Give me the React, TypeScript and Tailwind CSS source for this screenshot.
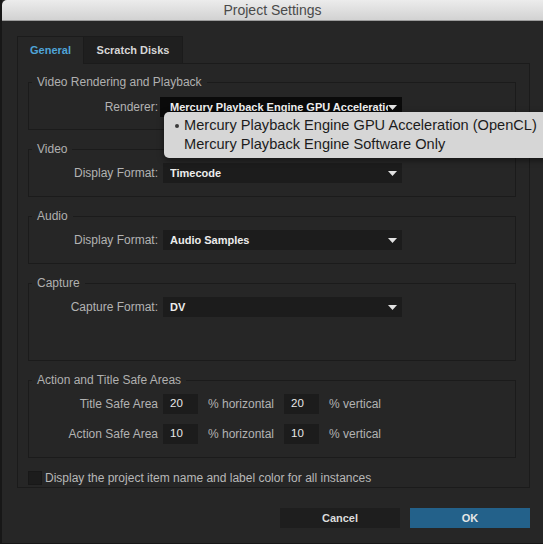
import React from "react";

function Arrow() {
  return (
    <svg width="9" height="5" viewBox="0 0 9 5" className="shrink-0">
      <polygon points="0,0 9,0 4.5,5" fill="#e2e2e2" />
    </svg>
  );
}

function Dropdown({ value }: { value: string }) {
  return (
    <div className="ml-[5px] w-[239px] h-[20px] bg-[#1c1c1c] flex items-center pl-[7px] pr-[5px] text-[11px] font-bold text-[#ececec]">
      <span className="flex-1 truncate">{value}</span>
      <Arrow />
    </div>
  );
}

function Label({ children }: { children: React.ReactNode }) {
  return <div className="w-[129px] shrink-0 text-right text-[12px] text-[#b3b3b3]">{children}</div>;
}

function Group({ title, h, children }: { title: string; h: string; children: React.ReactNode }) {
  return (
    <fieldset className={`border border-[#1b1b1b] ${h} flex flex-col`}>
      <legend className="ml-[3px] px-[5px] text-[12px] leading-[14px] text-[#b0b0b0]">{title}</legend>
      {children}
    </fieldset>
  );
}

function SmallInput({ v }: { v: string }) {
  return (
    <div className="w-[35px] h-[20px] bg-[#1c1c1c] flex items-center pl-[7px] text-[11.5px] text-[#e8e8e8]">{v}</div>
  );
}

function SafeRow({ label, a, b, mt }: { label: string; a: string; b: string; mt: string }) {
  return (
    <div className={`flex items-center h-[20px] ${mt}`}>
      <Label>{label}</Label>
      <div className="ml-[5px]"><SmallInput v={a} /></div>
      <div className="ml-[10px] w-[76px] text-[12px] text-[#b3b3b3]">% horizontal</div>
      <SmallInput v={b} />
      <div className="ml-[10px] text-[12px] text-[#b3b3b3]">% vertical</div>
    </div>
  );
}

export default function App() {
  return (
    <div className="w-[543px] h-[544px] overflow-hidden bg-[#171717] flex pl-[2px] pb-[1px] font-['Liberation_Sans',Arial,sans-serif]">
      <div className="flex-1 flex flex-col bg-[#262626]">
        <div className="h-[21px] shrink-0 rounded-tl-[5px] border-b border-[#9c9c9c] bg-gradient-to-b from-[#ececec] to-[#d2d2d2] flex items-center justify-center text-[14px] text-[#4a4a4a]">
          Project Settings
        </div>
        <div className="flex flex-col pl-[15px] pr-[13px] pt-[15px]">
          <div className="flex h-[27px]">
            <div className="relative z-10 -mb-px w-[67px] border border-b-0 border-[#1b1b1b] bg-[#262626] flex items-center justify-center text-[11px] font-bold text-[#4fa4d8]">
              General
            </div>
            <div className="w-[99px] border-t border-r border-[#1b1b1b] bg-[#1f1f1f] flex items-center justify-center text-[11px] font-bold text-[#d6d6d6]">
              Scratch Disks
            </div>
          </div>
          <div className="h-[425px] border border-[#1b1b1b] pl-[10px] pr-[13px] pt-[11px] flex flex-col gap-[12px]">
            <Group title="Video Rendering and Playback" h="h-[55px]">
              <div className="flex items-center h-[20px] mt-[8px]">
                <Label>Renderer:</Label>
                <div className="relative ml-[2px] w-[242px] h-[20px] bg-[#0a0a0a] flex items-center pl-[10px] pr-[5px] text-[11px] font-bold text-[#f0f0f0]">
                  <span className="flex-1 overflow-hidden whitespace-nowrap">Mercury Playback Engine GPU Acceleration (OpenCL)</span>
                  <Arrow />
                  <div className="absolute left-[4px] top-[15px] z-20 w-[420px] h-[46px] rounded-[5px] bg-[#d6d6d6] shadow-[0_2px_6px_rgba(0,0,0,0.5)] pt-[4px] text-[14.6px] leading-[19px] font-normal text-[#1c1c1c]">
                    <div className="flex items-center">
                      <span className="w-[20px] flex justify-end pr-[5px]"><span className="w-[4px] h-[4px] rounded-full bg-[#3a3a3a]" /></span>
                      <span>Mercury Playback Engine GPU Acceleration (OpenCL)</span>
                    </div>
                    <div className="flex items-center">
                      <span className="w-[20px]" />
                      <span>Mercury Playback Engine Software Only</span>
                    </div>
                  </div>
                </div>
              </div>
            </Group>
            <Group title="Video" h="h-[55px]">
              <div className="flex items-center h-[20px] mt-[7px]">
                <Label>Display Format:</Label>
                <Dropdown value="Timecode" />
              </div>
            </Group>
            <Group title="Audio" h="h-[55px]">
              <div className="flex items-center h-[20px] mt-[7px]">
                <Label>Display Format:</Label>
                <Dropdown value="Audio Samples" />
              </div>
            </Group>
            <Group title="Capture" h="h-[85px]">
              <div className="flex items-center h-[20px] mt-[7px]">
                <Label>Capture Format:</Label>
                <Dropdown value="DV" />
              </div>
            </Group>
            <Group title="Action and Title Safe Areas" h="h-[85px]">
              <SafeRow label="Title Safe Area" a="20" b="20" mt="mt-[7px]" />
              <SafeRow label="Action Safe Area" a="10" b="10" mt="mt-[10px]" />
            </Group>
            <div className="flex items-center gap-[3px] -mt-[1px]">
              <div className="w-[14px] h-[14px] bg-[#1c1c1c] border border-[#181818]" />
              <span className="text-[12px] text-[#b8b8b8]">Display the project item name and label color for all instances</span>
            </div>
          </div>
          <div className="flex justify-end gap-[10px] mt-[20px]">
            <div className="w-[120px] h-[20px] bg-[#1e1e1e] flex items-center justify-center text-[11px] font-bold text-[#dcdcdc]">Cancel</div>
            <div className="w-[120px] h-[20px] bg-[#23618a] flex items-center justify-center text-[11px] font-bold text-[#e6e6e6]">OK</div>
          </div>
        </div>
      </div>
    </div>
  );
}
